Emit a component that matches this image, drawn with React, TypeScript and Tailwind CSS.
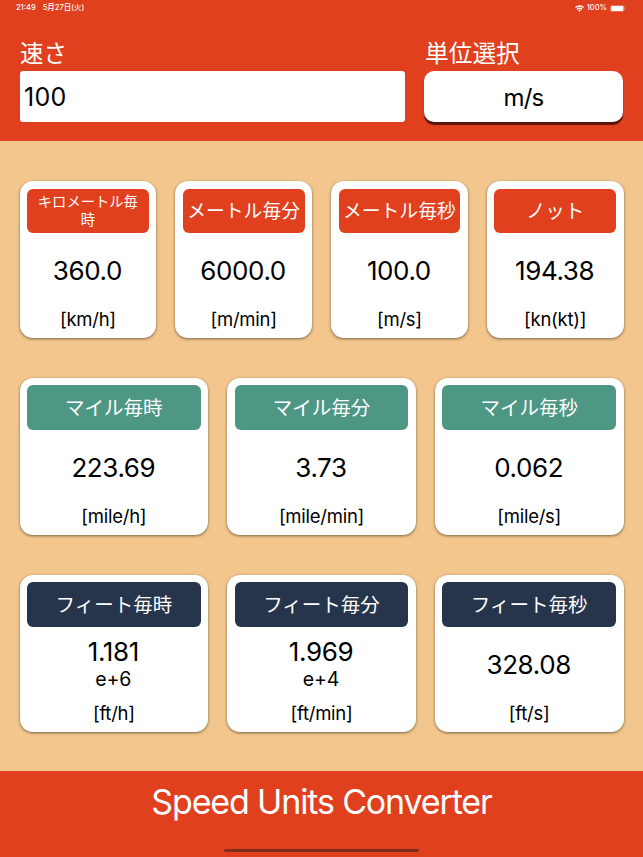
type Unit = { name: string; value: string; exp?: string; unit: string; size?: 'small' | 'medium' };

const rows: { color: string; cols: string; units: Unit[] }[] = [
  {
    color: 'bg-[#e0401e]',
    cols: 'grid-cols-4',
    units: [
      { name: 'キロメートル毎時', value: '360.0', unit: '[km/h]', size: 'small' },
      { name: 'メートル毎分', value: '6000.0', unit: '[m/min]', size: 'medium' },
      { name: 'メートル毎秒', value: '100.0', unit: '[m/s]', size: 'medium' },
      { name: 'ノット', value: '194.38', unit: '[kn(kt)]' },
    ],
  },
  {
    color: 'bg-[#4e9784]',
    cols: 'grid-cols-3',
    units: [
      { name: 'マイル毎時', value: '223.69', unit: '[mile/h]' },
      { name: 'マイル毎分', value: '3.73', unit: '[mile/min]' },
      { name: 'マイル毎秒', value: '0.062', unit: '[mile/s]' },
    ],
  },
  {
    color: 'bg-[#27354c]',
    cols: 'grid-cols-3',
    units: [
      { name: 'フィート毎時', value: '1.181', exp: 'e+6', unit: '[ft/h]' },
      { name: 'フィート毎分', value: '1.969', exp: 'e+4', unit: '[ft/min]' },
      { name: 'フィート毎秒', value: '328.08', unit: '[ft/s]' },
    ],
  },
];

const nameStyles = {
  small: 'w-[106px] pt-px text-[14.3px] leading-[18.5px]',
  medium: 'pt-[3px] text-[18.8px] leading-6 whitespace-nowrap',
  normal: 'pt-px text-[19.5px] leading-6 whitespace-nowrap',
};

function StatusBar() {
  return (
    <div className="flex h-4 items-center justify-between pr-[17px] pl-4 text-[7.5px] leading-4 font-medium">
      <div className="flex gap-[7px]">
        <span>21:49</span>
        <span>5月27日(火)</span>
      </div>
      <div className="flex items-center gap-[3px]">
        <svg width="9" height="7" viewBox="0 0 18 14" fill="none" stroke="white" strokeWidth="2.8">
          <path d="M1 5.2a11.5 11.5 0 0 1 16 0" />
          <path d="M4 8.8a7.2 7.2 0 0 1 10 0" />
          <path d="M9 13.5 6.3 10.8a3.9 3.9 0 0 1 5.4 0Z" fill="white" stroke="none" />
        </svg>
        <span>100%</span>
        <svg width="16" height="7" viewBox="0 0 16 7">
          <rect x=".3" y=".3" width="13.8" height="6.4" rx="2" fill="none" stroke="white" strokeOpacity=".5" strokeWidth=".6" />
          <rect x="1" y="1" width="12.4" height="5" rx="1.3" fill="white" />
          <path d="M14.9 2.5q1 1 0 2Z" fill="white" fillOpacity=".6" />
        </svg>
      </div>
    </div>
  );
}

function Card({ u, color }: { u: Unit; color: string }) {
  return (
    <div className="flex h-[157px] flex-col items-center rounded-[13px] bg-white p-[7.5px] text-black shadow-[0_1px_3px_rgba(0,0,0,0.5)]">
      <div className={`flex h-[44.5px] w-full shrink-0 items-center justify-center rounded-[6px] text-center text-white ${color}`}>
        <span className={nameStyles[u.size ?? 'normal']}>{u.name}</span>
      </div>
      <div className="flex h-[75px] shrink-0 flex-col items-center justify-center pr-px">
        <span className="text-[26px] leading-[31px] tracking-[-0.4px]">{u.value}</span>
        {u.exp && <span className="text-[19.5px] leading-[25px] tracking-[-0.1px]">{u.exp}</span>}
      </div>
      <span className="text-[18.5px] leading-[23px] tracking-[-0.25px]">{u.unit}</span>
    </div>
  );
}

export default function App() {
  return (
    <div className="flex h-[857px] w-[643px] flex-col overflow-hidden bg-[#f2c68c] font-['Inter','Noto_Sans_CJK_JP',sans-serif] text-white">
      <header className="h-[141px] shrink-0 bg-[#e0401e]">
        <StatusBar />
        <div className="flex gap-[19px] px-5 pt-[22px]">
          <div className="w-[385px]">
            <div className="h-[33px] text-[23.5px] leading-[32px]">速さ</div>
            <div className="flex h-[51px] items-center rounded-[3px] bg-white pt-0.5 pl-1 text-[25px] tracking-[0.3px] text-black">100</div>
          </div>
          <div className="w-[199px]">
            <div className="h-[33px] pl-px text-[23.7px] leading-[32px]">単位選択</div>
            <div className="flex h-[51px] items-center justify-center rounded-[10px] bg-white pt-0.5 text-[24px] tracking-[-0.8px] text-black shadow-[0_3px_1px_#5a1508]">m/s</div>
          </div>
        </div>
      </header>
      <main className="flex h-[630px] shrink-0 flex-col gap-[39.75px] px-[19.5px] pt-10">
        {rows.map((r) => (
          <div key={r.color} className={`grid gap-[19px] ${r.cols}`}>
            {r.units.map((u) => (
              <Card key={u.name} u={u} color={r.color} />
            ))}
          </div>
        ))}
      </main>
      <footer className="flex flex-1 flex-col items-center justify-between bg-[#e0401e] pt-[10px] pb-[5px]">
        <h1 className="text-[34px] leading-[42px] tracking-[-1.15px]">Speed Units Converter</h1>
        <div className="h-[3px] w-[195px] rounded-full bg-[#7e2f1c]" />
      </footer>
    </div>
  );
}
